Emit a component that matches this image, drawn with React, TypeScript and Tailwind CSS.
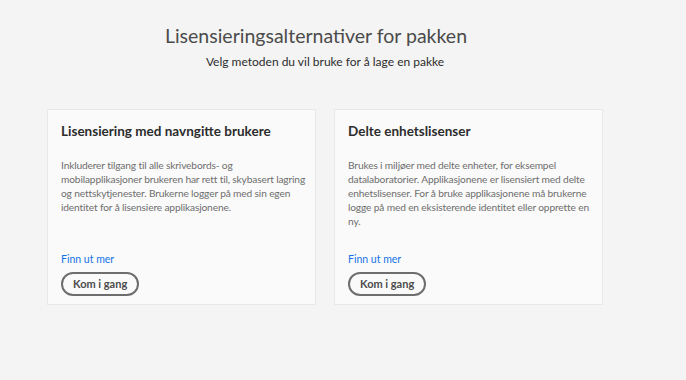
import React from "react";

const cards = [
  {
    title: "Lisensiering med navngitte brukere",
    body: "Inkluderer tilgang til alle skrivebords- og mobilapplikasjoner brukeren har rett til, skybasert lagring og nettskytjenester. Brukerne logger på med sin egen identitet for å lisensiere applikasjonene.",
  },
  {
    title: "Delte enhetslisenser",
    body: "Brukes i miljøer med delte enheter, for eksempel datalaboratorier. Applikasjonene er lisensiert med delte enhetslisenser. For å bruke applikasjonene må brukerne logge på med en eksisterende identitet eller opprette en ny.",
  },
];

export default function App() {
  return (
    <div className="w-[686px] h-[380px] bg-[#f4f4f4] overflow-hidden" style={{ fontFamily: "Lato, 'Noto Sans', sans-serif" }}>
      <div className="ml-[47px] w-[556px] flex flex-col">
        <h1 className="mt-[22px] pr-[18px] text-center text-[19.5px] leading-[28px] text-[#4b4b4b]">Lisensieringsalternativer for pakken</h1>
        <p className="mt-[4px] text-center text-[12px] leading-[16px] text-[#2c2c2c]">Velg metoden du vil bruke for å lage en pakke</p>
        <div className="mt-[39px] flex gap-[18px]">
          {cards.map((c) => (
            <div key={c.title} className="w-[269px] h-[196px] bg-[#fafafa] border border-[#e8e8e8] pl-[13px] pr-[8px] pt-[12px] flex flex-col">
              <h2 className="text-[13.5px] leading-[18px] font-bold text-[#2c2c2c]">{c.title}</h2>
              <p className="mt-[18px] text-[10.2px] leading-[14px] tracking-[-0.15px] text-[#6e6e6e]">{c.body}</p>
              <div className="mt-auto mb-[8px] flex flex-col items-start">
                <a className="text-[10.5px] leading-[14px] text-[#1473e6]">Finn ut mer</a>
                <button className="mt-[6px] h-[24px] px-[10px] rounded-full border-2 border-[#6e6e6e] text-[11px] font-bold text-[#4b4b4b]">Kom i gang</button>
              </div>
            </div>
          ))}
        </div>
      </div>
    </div>
  );
}
